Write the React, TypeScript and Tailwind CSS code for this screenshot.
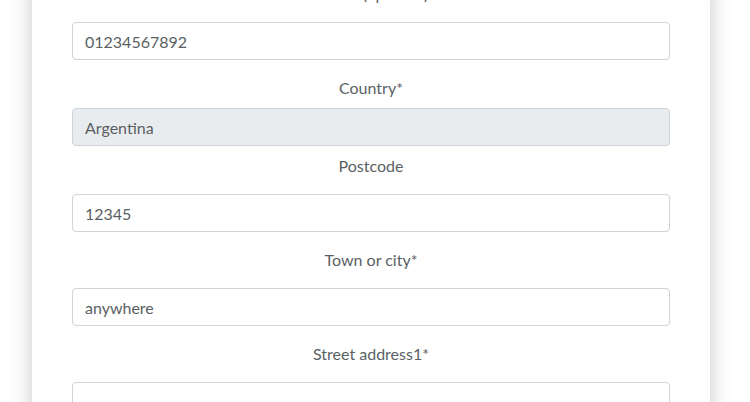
export default function App() {
  const font = { fontFamily: "Lato, 'Open Sans', sans-serif" };
  return (
    <div className="h-[402px] w-[750px] overflow-hidden bg-white" style={font}>
      <div className="ml-[32px] h-[440px] w-[678px] bg-white px-10 shadow-[0_0_20px_rgba(0,0,0,0.22)]">
        <div className="-mt-[18px] flex flex-col text-[16px] text-[#5a5f64]">
          <label className="mb-4 block text-center leading-6">Phone (optional)</label>
          <input
            readOnly
            value="01234567892"
            className="h-[38px] w-full rounded border border-[#ced4da] bg-white px-3 text-[16px] text-[#5a5f64] outline-none"
          />

          <label className="mb-2 mt-4 block text-center leading-6">Country*</label>
          <input
            disabled
            value="Argentina"
            className="h-[38px] w-full rounded border border-[#ced4da] bg-[#e9ecef] px-3 text-[16px] text-[#5a5f64] outline-none"
          />

          <label className="mb-4 mt-2 block text-center leading-6">Postcode</label>
          <input
            readOnly
            value="12345"
            className="h-[38px] w-full rounded border border-[#ced4da] bg-white px-3 text-[16px] text-[#5a5f64] outline-none"
          />

          <label className="mb-4 mt-4 block text-center leading-6">Town or city*</label>
          <input
            readOnly
            value="anywhere"
            className="h-[38px] w-full rounded border border-[#ced4da] bg-white px-3 text-[16px] text-[#5a5f64] outline-none"
          />

          <label className="mb-4 mt-4 block text-center leading-6">Street address1*</label>
          <input
            readOnly
            value=""
            className="h-[38px] w-full rounded border border-[#ced4da] bg-white px-3 text-[16px] text-[#5a5f64] outline-none"
          />
        </div>
      </div>
    </div>
  );
}
